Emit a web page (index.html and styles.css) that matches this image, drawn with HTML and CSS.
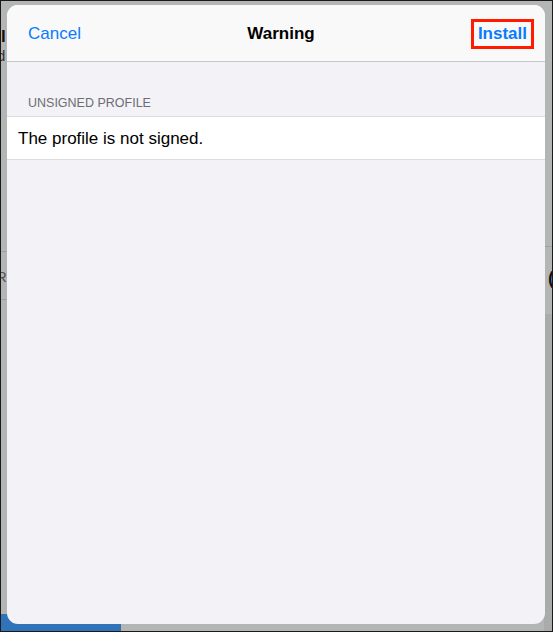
FILE: index.html
```html
<!DOCTYPE html>
<html>
<head>
<meta charset="utf-8">
<link rel="stylesheet" href="styles.css">
</head>
<body>
<div class="screen">
  <div class="backdrop">
    <div class="strip left-strip">
      <span class="bg-glyph g1">l</span>
      <span class="bg-glyph g2">d</span>
      <span class="bg-line l1"></span>
      <span class="bg-line l2"></span>
      <span class="bg-glyph g3">R</span>
    </div>
    <div class="strip right-strip">
      <span class="bg-glyph g4">(</span>
      <span class="bg-line r1"></span>
      <span class="bg-dark r2"></span>
    </div>
    <span class="bg-bar"></span>
  </div>
  <div class="modal">
    <header class="nav">
      <span class="nav-btn cancel">Cancel</span>
      <span class="nav-title">Warning</span>
      <span class="nav-btn install">Install</span>
    </header>
    <div class="content">
      <div class="section-head">UNSIGNED PROFILE</div>
      <div class="cell">The profile is not signed.</div>
    </div>
  </div>
</div>
</body>
</html>
```
FILE: styles.css
```css
html, body {
  margin: 0;
  padding: 0;
}
body {
  width: 553px;
  height: 632px;
  overflow: hidden;
  font-family: "Liberation Sans", Arial, sans-serif;
}
.screen {
  position: relative;
  box-sizing: border-box;
  width: 553px;
  height: 632px;
  border: 1px solid #1a1a1a;
  background: #b4b6b6;
  padding: 4px 7px 7px 6px;
  display: flex;
}
.backdrop {
  position: absolute;
  inset: 0;
}
.strip {
  position: absolute;
  top: 0;
  bottom: 0;
  overflow: hidden;
}
.left-strip { left: 0; width: 7px; }
.right-strip { right: 0; width: 8px; }
.bg-glyph {
  position: absolute;
  font-size: 17px;
  color: #111;
  line-height: 1;
}
.g1 { left: 0; top: 27px; font-weight: 700; }
.g2 { left: -4px; top: 47px; font-size: 15px; color: #333; }
.g3 { left: -5px; top: 268px; font-size: 15px; color: #555; }
.g4 { left: 4px; top: 268px; font-weight: 700; font-size: 18px; }
.bg-line {
  position: absolute;
  left: 0;
  right: 0;
  height: 1px;
  background: #9fa1a1;
}
.l1 { top: 250px; }
.l2 { top: 298px; }
.r1 { top: 245px; }
.bg-dark {
  position: absolute;
  left: 0;
  right: 0;
  background: #aaacac;
}
.r2 { top: 313px; bottom: 0; }
.bg-bar {
  position: absolute;
  left: 0;
  bottom: 0;
  width: 120px;
  height: 17px;
  background: #2f73b9;
}
.modal {
  position: relative;
  z-index: 1;
  flex: 1;
  background: #f2f2f7;
  border-radius: 11px;
  overflow: hidden;
  display: flex;
  flex-direction: column;
}
.nav {
  height: 57px;
  flex: none;
  box-sizing: border-box;
  background: #f9f9f9;
  border-bottom: 1px solid #c6c6c9;
  display: grid;
  grid-template-columns: 1fr auto 1fr;
  align-items: center;
  padding: 1px 11px 0 21px;
}
.nav-btn {
  font-size: 17px;
  color: #0a7aff;
}
.cancel {
  justify-self: start;
}
.nav-title {
  font-size: 17px;
  font-weight: 700;
  color: #000;
}
.install {
  justify-self: end;
  font-weight: 700;
  border: 3px solid #ff1a00;
  padding: 1px 4px 1px 4px;
  line-height: 22px;
}
.content {
  padding-top: 34px;
}
.section-head {
  font-size: 12.5px;
  color: #6d6d72;
  padding: 0 0 6px 21px;
}
.cell {
  background: #fff;
  border-top: 1px solid #dcdce0;
  border-bottom: 1px solid #dcdce0;
  display: flex;
  align-items: center;
  padding-left: 11px;
  padding-top: 2px;
  box-sizing: border-box;
  height: 44px;
  font-size: 17px;
  color: #000;
}
```
